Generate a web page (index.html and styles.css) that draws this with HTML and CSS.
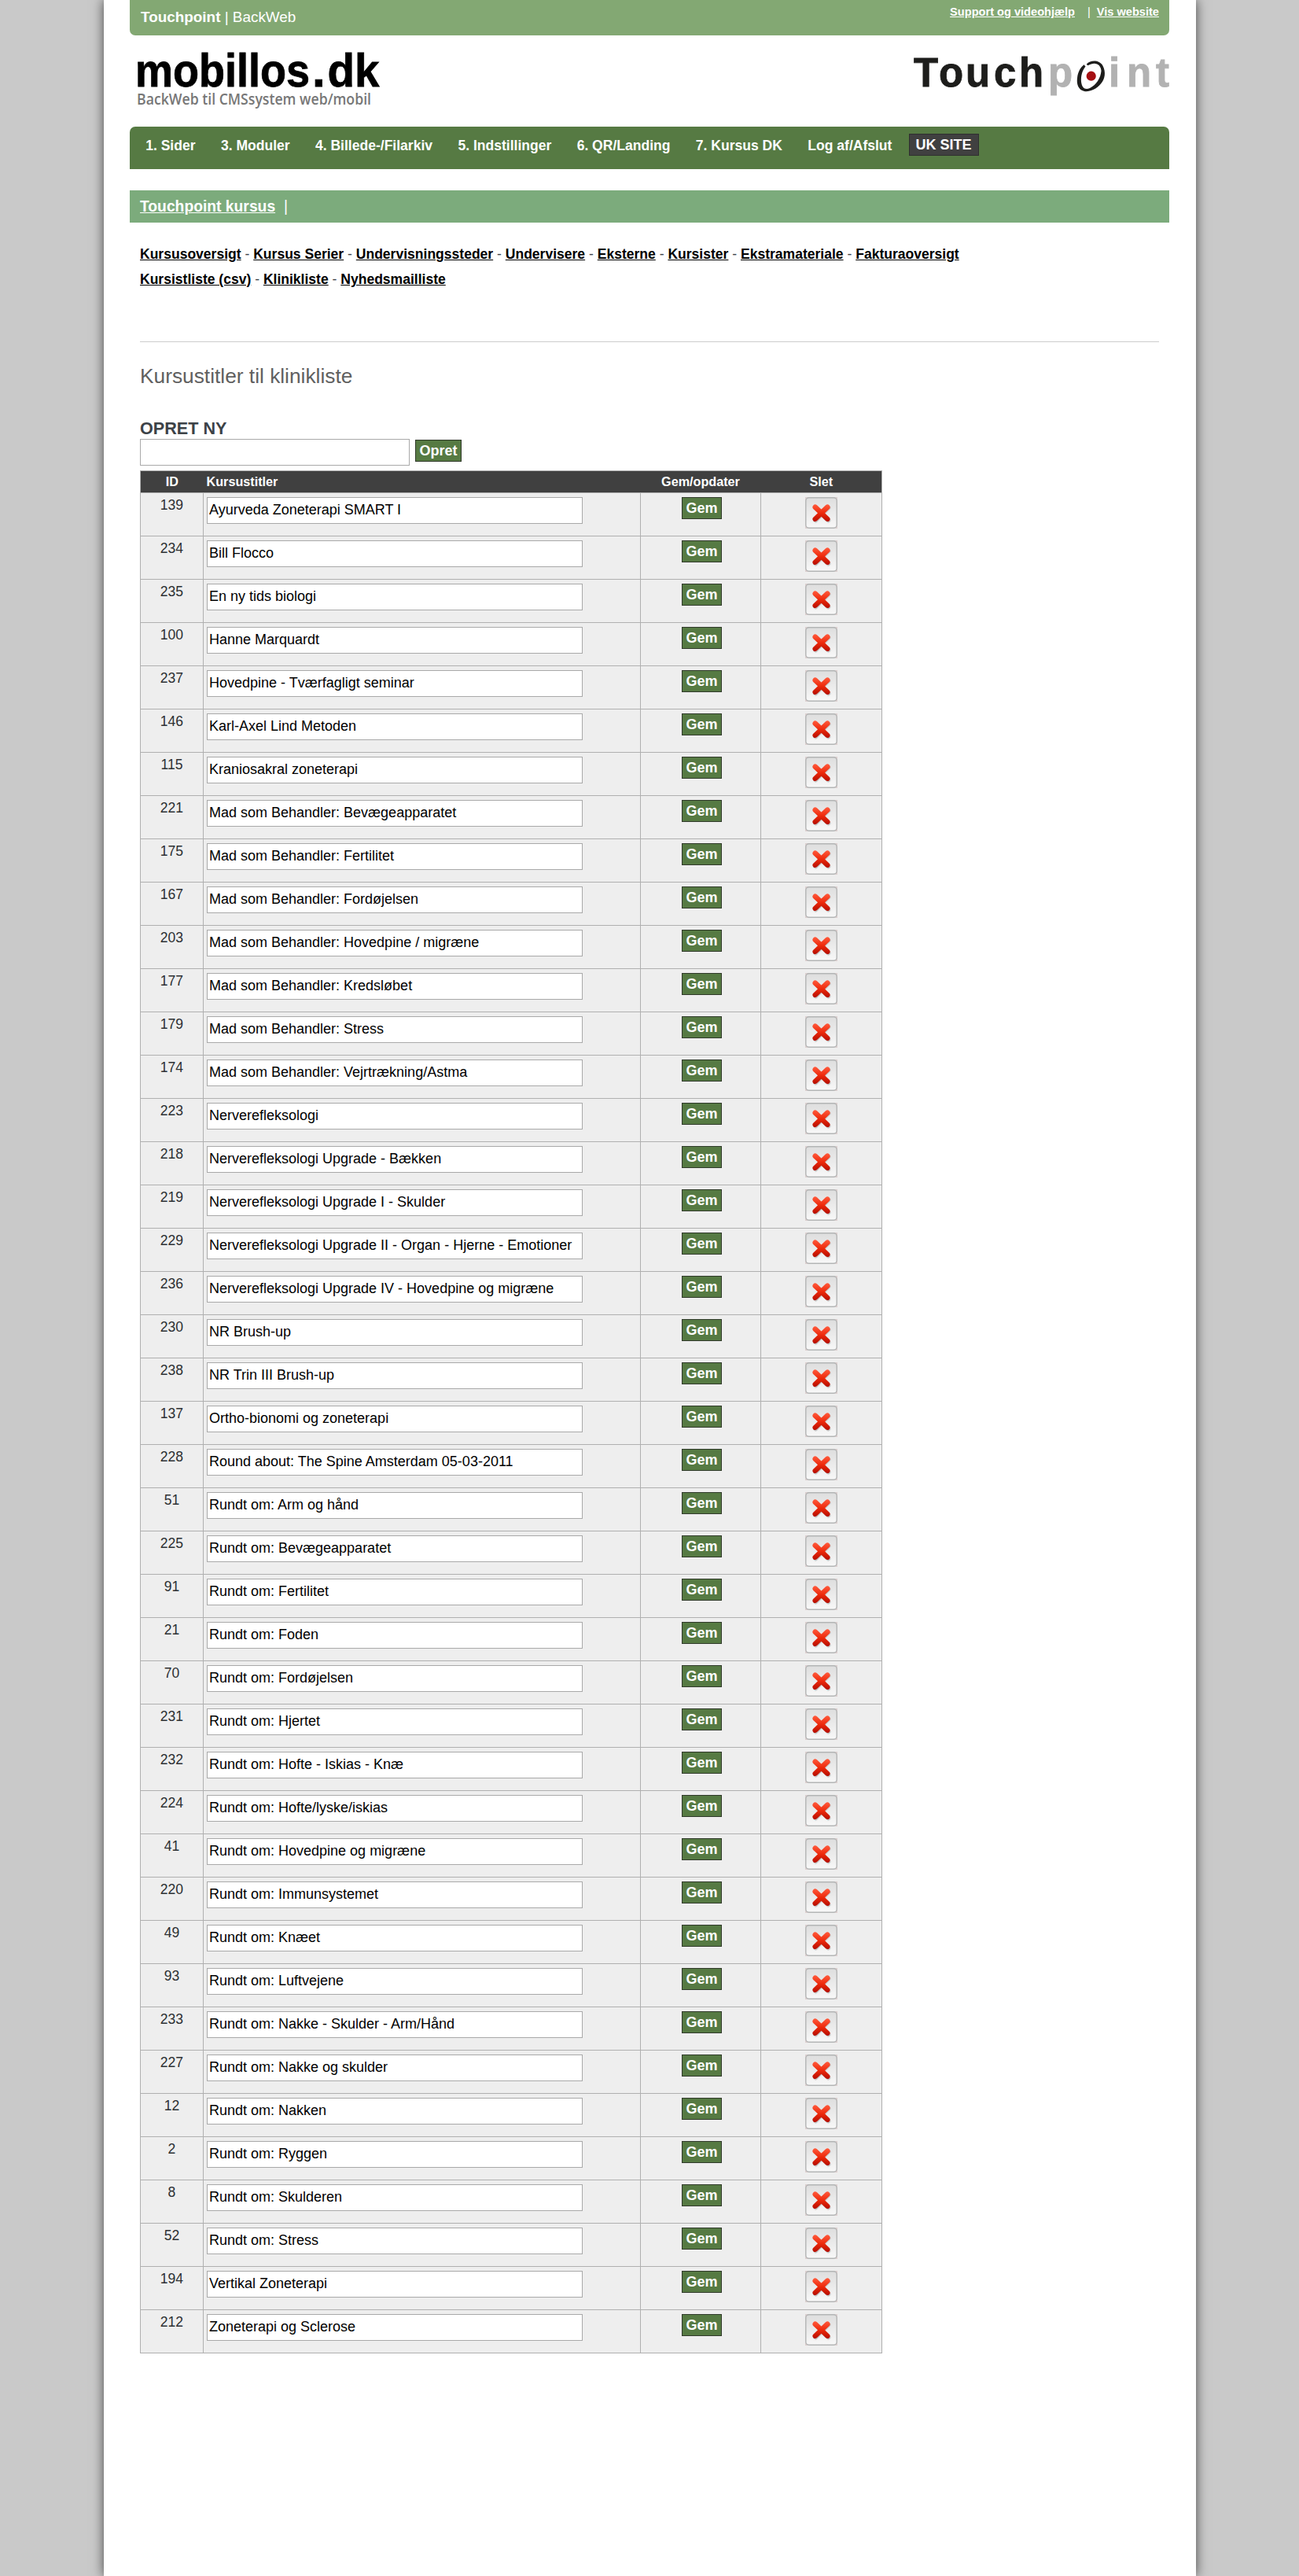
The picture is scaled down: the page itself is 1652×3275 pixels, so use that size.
FILE: index.html
```html
<!DOCTYPE html>
<html lang="da">
<head>
<meta charset="utf-8">
<title>Touchpoint | BackWeb</title>
<link rel="stylesheet" href="styles.css">
</head>
<body>
<div class="page">
  <div class="topbar">
    <div class="topbar-title"><b>Touchpoint</b> | BackWeb</div>
    <div class="topbar-links"><a href="#">Support og videohjælp</a><span class="topbar-sep">|</span><a href="#">Vis website</a></div>
  </div>
  <div class="logos">
    <svg class="logo-mobillos" width="320" height="80" viewBox="0 0 320 80">
      <text class="logo-name" x="-2" y="49.500" textLength="222" lengthAdjust="spacingAndGlyphs">mobillos</text>
      <text class="logo-name" x="223" y="49.500">.</text>
      <text class="logo-name" x="242.500" y="49.500" textLength="66" lengthAdjust="spacingAndGlyphs">dk</text>
      <text class="logo-tag" x="0" y="73" textLength="298" lengthAdjust="spacingAndGlyphs">BackWeb til CMSsystem web/mobil</text>
    </svg>
    <svg class="logo-touchpoint" width="324" height="60" viewBox="0 0 324 60">
      <text class="tp-dark" y="39.500" x="-1 31 65 101 133">Touch</text>
      <text class="tp-light" y="39.500" x="170">p</text>
      <text class="tp-light" y="39.500" x="247 270 307">int</text>
      <path class="tp-ring" d="M218.700 11.700C224 6 235 6 239.300 13.300C244 22 242 31 237 36.500C231 44 222 47 216 46C208 44 206 37 207 29C208 21 211 16 215.500 12.300L217.500 14.500C213 20 211.500 27 212 34C213 42 217 44.500 223 42C231 38 237 29 237.500 20C237 12 230 7.500 220.500 13.300Z"/>
      <circle class="tp-dot" cx="224.700" cy="26.700" r="6.100"/>
    </svg>
  </div>
  <ul class="nav">
    <li>1. Sider</li><li>3. Moduler</li><li>4. Billede-/Filarkiv</li><li>5. Indstillinger</li><li>6. QR/Landing</li><li>7. Kursus DK</li><li>Log af/Afslut</li><li class="nav-uk">UK SITE</li>
  </ul>
  <div class="subbar"><a href="#">Touchpoint kursus</a><span>|</span></div>
  <div class="content">
    <div class="links">
      <a href="#">Kursusoversigt</a> - <a href="#">Kursus Serier</a> - <a href="#">Undervisningssteder</a> - <a href="#">Undervisere</a> - <a href="#">Eksterne</a> - <a href="#">Kursister</a> - <a href="#">Ekstramateriale</a> - <a href="#">Fakturaoversigt</a><br>
      <a href="#">Kursistliste (csv)</a> - <a href="#">Klinikliste</a> - <a href="#">Nyhedsmailliste</a>
    </div>
    <h1>Kursustitler til klinikliste</h1>
    <h2>OPRET NY</h2>
    <div class="create"><input class="field create-field" type="text"><button class="btn btn-create">Opret</button></div>
    <table>
      <colgroup><col class="c-id"><col class="c-title"><col class="c-save"><col class="c-del"></colgroup>
      <thead><tr><th>ID</th><th class="left">Kursustitler</th><th>Gem/opdater</th><th>Slet</th></tr></thead>
      <tbody id="rows"></tbody>
    </table>
  </div>
</div>
<svg width="0" height="0" class="defs">
  <defs>
    <linearGradient id="red" x1="0" y1="0" x2="0" y2="1"><stop offset="0" stop-color="#ff5a3c"/><stop offset=".5" stop-color="#ee2a0c"/><stop offset="1" stop-color="#b50d00"/></linearGradient>
    <linearGradient id="face" x1="0" y1="0" x2="0" y2="1"><stop offset="0" stop-color="#dedede"/><stop offset="1" stop-color="#f8f8f8"/></linearGradient>
    <symbol id="del" viewBox="0 0 41 40">
      <rect width="41" height="40" fill="#dccfcf"/>
      <rect x=".8" y=".8" width="39.400" height="38.400" rx="4" fill="url(#face)" stroke="#b3b5b5" stroke-width="1.400"/>
      <path d="M12.500 12.500L28.500 28.500M28.500 12.500L12.500 28.500" transform="translate(.8 1)" stroke="#999" stroke-opacity=".5" stroke-width="6" stroke-linecap="round"/>
      <path fill="url(#red)" d="M10.300 10.500Q12.500 8.300 15 10.300L20.500 15.600L26 10.300Q28.500 8.300 30.700 10.500Q32.700 12.800 30.700 15L25 20.300L30.700 25.800Q32.700 28 30.600 30.200Q28.300 32 26 30L20.500 24.700L15 30Q12.700 32 10.400 30.200Q8.300 28 10.300 25.800L16 20.300L10.300 15Q8.300 12.800 10.300 10.500Z"/>
    </symbol>
  </defs>
</svg>
<script src="rows.js"></script>
</body>
</html>
```
FILE: styles.css
```css
body {
  margin: 0;
  background: #c9c9c9;
  color: #3c4247;
  font: 17.55px/32px "Liberation Sans", Arial, sans-serif;
}
.page {
  box-sizing: border-box;
  width: 1389px;
  height: 3275px;
  margin: 0 0 0 132px;
  padding: 0 34px 0 33px;
  background: #fff;
  box-shadow: 0 0 14px #444;
}
.topbar {
  display: flex;
  justify-content: space-between;
  height: 45px;
  box-sizing: border-box;
  padding: 0 13px 0 14px;
  background: #83a873;
  border-radius: 0 0 7px 7px;
  color: #fff;
}
.topbar-title { font-size: 18.9px; line-height: 43px; }
.topbar-links { font-size: 14.6px; line-height: 30px; }
.topbar-links a, .subbar a { color: #fff; font-weight: bold; }
.topbar-sep { margin: 0 8px 0 16px; }
.logos {
  display: flex;
  justify-content: space-between;
  height: 101px;
  padding: 15px 0 0 8.5px;
}
.logo-mobillos, .logo-touchpoint { overflow: visible; }
.logo-name {
  font: bold 60px "Liberation Sans", sans-serif;
  stroke: #000;
  stroke-width: .8px;
}
.logo-tag { font: 600 19.500px "Open Sans", sans-serif; fill: #777; }
.logo-touchpoint { margin-top: 10px; }
.tp-dark, .tp-light {
  font: bold 51px "Liberation Sans", sans-serif;
  fill: #1d1d1b;
  stroke: #1d1d1b;
  stroke-width: .8px;
}
.tp-light { fill: #b2b2b2; stroke: #b2b2b2; }
.tp-ring { fill: #1d1d1b; }
.tp-dot { fill: #a50f12; }
.nav {
  display: flex;
  align-items: flex-start;
  height: 54px;
  box-sizing: border-box;
  margin: 0;
  padding: 9px 4px;
  list-style: none;
  background: #567a43;
  border-radius: 7px 7px 0 0;
  color: #fff;
  font-weight: bold;
  line-height: 30px;
}
.nav li { padding: 0 16.2px; }
.nav .nav-uk {
  box-sizing: border-box;
  width: 89px;
  height: 28px;
  margin-left: 5px;
  padding: 0;
  border: 1px solid #2f2f2f;
  background: #404040;
  font-size: 18px;
  line-height: 26px;
  text-align: center;
}
.subbar {
  height: 41px;
  margin-top: 27px;
  padding-left: 13px;
  background: #7cab7c;
  color: #fff;
  font-size: 19.3px;
  line-height: 41px;
}
.subbar span { margin-left: 11px; }
.content { padding: 24px 13px 0; }
.links {
  height: 127px;
  border-bottom: 1px solid #ccc;
}
.links a { color: #000; font-weight: bold; }
h1 {
  margin: 26px 0 0;
  color: #606060;
  font-size: 26.3px;
  font-weight: normal;
  line-height: 34px;
}
h2 {
  margin: 37px 0 0;
  font-size: 21.600px;
  line-height: 26px;
}
.create {
  display: flex;
  align-items: flex-start;
  gap: 7px;
  margin-bottom: 6px;
}
.field {
  display: block;
  box-sizing: border-box;
  width: 478px;
  height: 34px;
  margin: 0;
  padding: 0 2px 2px;
  border: 1px solid #a9a9a9;
  background: #fff;
  color: #000;
  font: 18px "Liberation Sans", Arial, sans-serif;
}
.create-field { width: 343px; }
.btn {
  box-sizing: border-box;
  width: 51px;
  height: 28px;
  padding: 0;
  border: 1px solid #303a2a;
  background: #567a43;
  color: #fff;
  font: bold 18px/24px "Liberation Sans", Arial, sans-serif;
}
.btn-create { width: 59px; margin-top: 1px; }
table {
  width: 944px;
  table-layout: fixed;
  border-collapse: collapse;
  border: 1px solid #b0b0b0;
}
.c-id { width: 80px; }
.c-title { width: 556px; }
.c-save { width: 153px; }
.c-del { width: 154px; }
th {
  height: 27px;
  padding: 0;
  background: #404040;
  color: #fff;
  font-size: 16.2px;
  line-height: 27px;
}
.left { padding-left: 4px; text-align: left; }
td {
  height: 49px;
  padding: 5px 4px 0;
  border: 1px solid #b0b0b0;
  background: #eee;
  color: #2d3033;
  vertical-align: top;
  text-align: center;
  line-height: 20px;
}
td .btn { display: block; margin: 0 auto 0 48px; }
.del { display: block; width: 41px; height: 40px; margin: 0 auto; }
.defs { display: block; }
```
FILE: rows.js
```js
const rows = `139|Ayurveda Zoneterapi SMART I
234|Bill Flocco
235|En ny tids biologi
100|Hanne Marquardt
237|Hovedpine - Tværfagligt seminar
146|Karl-Axel Lind Metoden
115|Kraniosakral zoneterapi
221|Mad som Behandler: Bevægeapparatet
175|Mad som Behandler: Fertilitet
167|Mad som Behandler: Fordøjelsen
203|Mad som Behandler: Hovedpine / migræne
177|Mad som Behandler: Kredsløbet
179|Mad som Behandler: Stress
174|Mad som Behandler: Vejrtrækning/Astma
223|Nerverefleksologi
218|Nerverefleksologi Upgrade - Bækken
219|Nerverefleksologi Upgrade I - Skulder
229|Nerverefleksologi Upgrade II - Organ - Hjerne - Emotioner
236|Nerverefleksologi Upgrade IV - Hovedpine og migræne
230|NR Brush-up
238|NR Trin III Brush-up
137|Ortho-bionomi og zoneterapi
228|Round about: The Spine Amsterdam 05-03-2011
51|Rundt om: Arm og hånd
225|Rundt om: Bevægeapparatet
91|Rundt om: Fertilitet
21|Rundt om: Foden
70|Rundt om: Fordøjelsen
231|Rundt om: Hjertet
232|Rundt om: Hofte - Iskias - Knæ
224|Rundt om: Hofte/lyske/iskias
41|Rundt om: Hovedpine og migræne
220|Rundt om: Immunsystemet
49|Rundt om: Knæet
93|Rundt om: Luftvejene
233|Rundt om: Nakke - Skulder - Arm/Hånd
227|Rundt om: Nakke og skulder
12|Rundt om: Nakken
2|Rundt om: Ryggen
8|Rundt om: Skulderen
52|Rundt om: Stress
194|Vertikal Zoneterapi
212|Zoneterapi og Sclerose`.split("\n");

document.getElementById("rows").innerHTML = rows.map(row => {
  const [id, title] = row.split("|");
  return `<tr><td>${id}</td><td><input class="field" type="text" value="${title}"></td>` +
    `<td><button class="btn">Gem</button></td><td><svg class="del"><use href="#del"/></svg></td></tr>`;
}).join("");
```
